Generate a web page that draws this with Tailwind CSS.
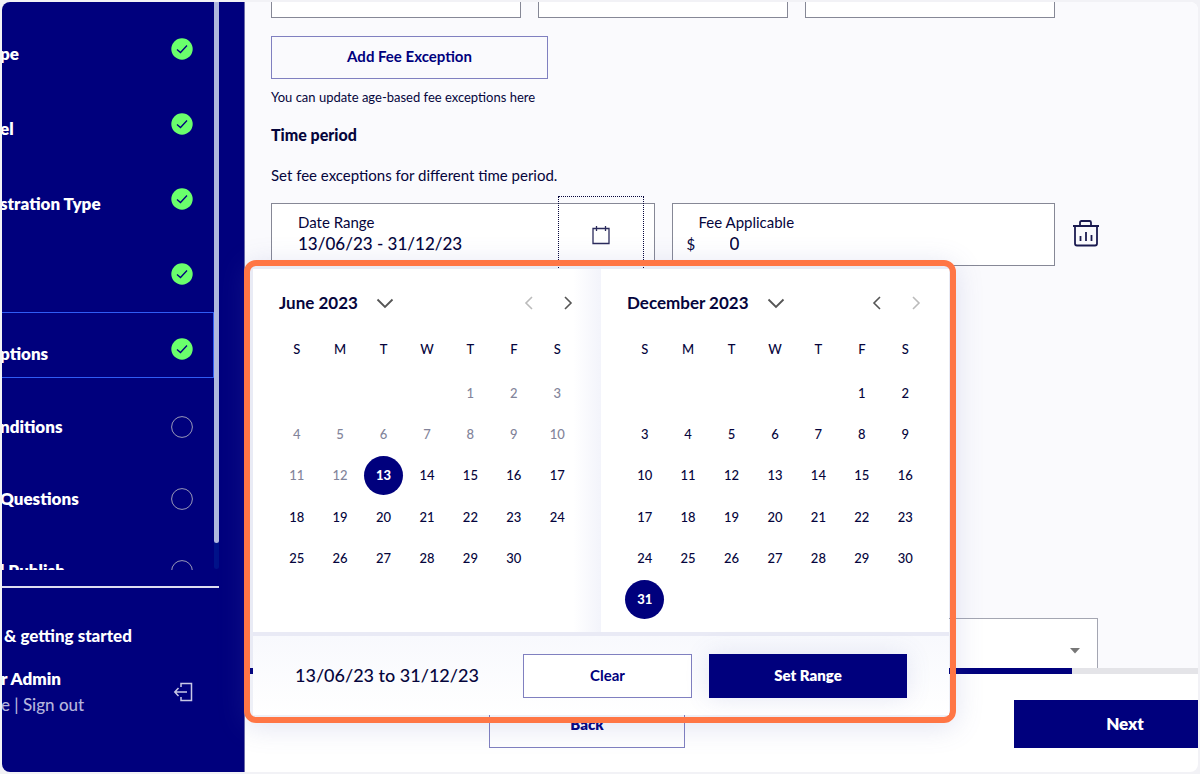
<!DOCTYPE html>
<html lang="en">
<head>
    <meta charset="UTF-8">
    <meta name="viewport" content="width=device-width, initial-scale=1.0">
    <title>Fee Exceptions</title>
    <script src="https://cdn.jsdelivr.net/npm/@tailwindcss/browser@4"></script>
</head>
<body class="bg-[#f2f2f6] font-['Lato',sans-serif] text-[#05053c]">

    <div class="relative h-screen p-0.5">
        <div class="flex h-full overflow-hidden rounded-lg bg-white">

            <!-- Sidebar -->
            <aside class="flex w-[243px] shrink-0 flex-col overflow-hidden border-r border-[#6c6ca8] bg-[#00007d] pr-[25px] text-[17px] font-extrabold text-white">
                <nav class="flex h-[568px] overflow-hidden">
                    <ul id="steps" class="flex-1 pt-[10px]"></ul>
                    <div class="h-[567px] w-[5px] rounded-b bg-[#001289]">
                        <div class="h-[541px] rounded-b bg-[#b0b8de]"></div>
                    </div>
                </nav>
                <div class="mt-4 border-t-2 border-[#dcdcf0]"></div>
                <a href="#" class="mt-9 pl-0.5 leading-6 font-black">&amp; getting started</a>
                <div class="mt-[18px] flex items-center justify-between pr-[26px]">
                    <div class="-ml-px leading-[26px]">
                        <p>r Admin</p>
                        <p class="font-medium text-[#b4b4dc]"><a href="#">e</a> | <a href="#">Sign out</a></p>
                    </div>
                    <button aria-label="Sign out">
                        <svg class="size-5" viewBox="0 0 20 20" fill="none" stroke="#c8c8e6" stroke-width="1.5">
                            <path d="M8 5V1.500H18.500V18.500H8V15M14 10H2M5.500 6L1.800 10L5.500 14"/>
                        </svg>
                    </button>
                </div>
            </aside>

            <!-- Main -->
            <main class="flex min-w-0 flex-1 flex-col">
                <div class="flex flex-1 flex-col overflow-hidden bg-[#fafafd] pl-[26px]">
                    <div class="grid grid-cols-3 gap-[17px] pr-[143px]">
                        <input aria-label="Minimum age" class="h-4 border border-t-0 border-[#868896] bg-white">
                        <input aria-label="Maximum age" class="h-4 border border-t-0 border-[#868896] bg-white">
                        <input aria-label="Fee" class="h-4 border border-t-0 border-[#868896] bg-white">
                    </div>
                    <button class="mt-[18px] h-[43px] w-[277px] shrink-0 border border-[#8080c0] pb-0.5 text-[15px] font-bold text-[#00007d]">Add Fee Exception</button>
                    <p class="mt-2 text-[13px] leading-5">You can update age-based fee exceptions here</p>
                    <h2 class="mt-4 text-[16px] leading-6 font-black">Time period</h2>
                    <p class="mt-4 text-[15px] leading-6">Set fee exceptions for different time period.</p>

                    <div class="mt-4 flex items-start">
                        <div class="grid flex-1 grid-cols-2 gap-[17px]">
                            <div class="relative h-[63px] border border-[#868896] bg-white pt-2 pl-[26px]">
                                <label for="range" class="block text-[15px] leading-5">Date Range</label>
                                <input id="range" value="13/06/23 - 31/12/23" class="block w-[220px] text-[17px] leading-6 font-medium outline-none">
                                <button aria-label="Open calendar" class="absolute -top-2 right-2.5 flex h-[78px] w-[86px] items-center justify-center border border-dotted border-[#05053c]">
                                    <svg class="size-5" viewBox="0 0 20 20" fill="none" stroke="#2a2a5c" stroke-width="1.300">
                                        <path d="M2 3.500H18V18.500H2ZM5.500 1V6M14.500 1V6"/>
                                    </svg>
                                </button>
                            </div>
                            <div class="h-[63px] border border-[#868896] bg-white pt-2">
                                <label for="fee" class="block pl-[26px] text-[15px] leading-5">Fee Applicable</label>
                                <div class="flex pl-[14px] leading-6">
                                    <span class="w-[43px] text-[15px]">$</span>
                                    <input id="fee" value="0" class="w-40 text-[17px] font-medium outline-none">
                                </div>
                            </div>
                        </div>
                        <button aria-label="Delete" class="mt-4 mr-[98px] ml-[17px]">
                            <svg class="size-7" viewBox="0 0 28 28" fill="none" stroke="#1a1a50" stroke-width="1.800">
                                <path d="M1 7H27M8 7V3.500Q8 2 9.500 2H17.500Q19 2 19 3.500V7M3 7V24.500Q3 26.500 5 26.500H23Q25 26.500 25 24.500V7M8.500 17V22M14 13V22M19.500 16V22"/>
                            </svg>
                        </button>
                    </div>

                    <div class="mt-auto mr-[100px] flex h-[50px] shrink-0 border border-b-0 border-[#a4a6b2] bg-white">
                        <select aria-label="Time zone" class="w-full appearance-none outline-none"></select>
                        <svg class="mt-7 mr-4 h-2 w-3 shrink-0" viewBox="0 0 12 8"><path d="M1 1H11L6 6.500Z" fill="#777"/></svg>
                    </div>
                </div>

                <!-- Progress -->
                <div class="h-1.5 bg-[#e4e4e8]">
                    <div class="h-full bg-[#00007d]" style="width: 86.8%"></div>
                </div>

                <div class="flex h-[98px] items-start justify-between pt-[26px] pl-[244px]">
                    <button class="h-12 w-[196px] border border-[#8080c0] text-[15px] font-extrabold text-[#00007d]">Back</button>
                    <button class="h-12 w-[184px] bg-[#00007d] pl-[38px] text-[17px] font-extrabold text-white">Next</button>
                </div>
            </main>
        </div>

        <!-- Date range popup -->
        <div class="absolute top-[260px] left-[244px] w-[712px] rounded-xl border-6 border-[#ff7645] bg-[#2a3a9c]/8 pt-[3px] pr-px pb-[2px] pl-[3px] shadow-[0_4px_28px_rgba(90,100,180,0.18)]">
            <div class="bg-white">
                <div class="flex border-b-4 border-[#e9eaf5]">
                    <section id="june" class="flex-1 bg-linear-to-l from-[#f3f4fb] to-white to-8% px-[22px] pb-3"></section>
                    <section id="december" class="flex-1 px-[22px] pb-3"></section>
                </div>
                <div class="flex h-[79px] items-center bg-linear-to-b from-[#f8f9fd] to-white px-[42px]">
                    <p class="flex-1 text-[18px] font-medium">13/06/23 to 31/12/23</p>
                    <button class="mr-[17px] h-11 w-[169px] border border-[#8080c0] bg-white text-[15px] font-bold text-[#00007d]">Clear</button>
                    <button class="h-11 w-[198px] bg-[#00007d] text-[15px] font-extrabold text-white shadow-[0_0_24px_rgba(90,100,180,0.15)]">Set Range</button>
                </div>
            </div>
        </div>
    </div>

    <script>
        const tick = `<svg class="size-[22px]" viewBox="0 0 22 22"><circle cx="11" cy="11" r="10.7" fill="#6aff6c"/><path d="M6 11.500L9.500 14.500L16 7.500" fill="none" stroke="#00007d" stroke-width="1.300"/></svg>`;
        const ring = `<svg class="size-[22px]" viewBox="0 0 22 22"><circle cx="11" cy="11" r="10.400" fill="none" stroke="#9898b8"/></svg>`;

        const steps = [
            { text: "pe", done: true },
            { text: "el", done: true },
            { text: "stration Type", done: true },
            { text: "", done: true },
            { text: "ptions", done: true, active: true },
            { text: "nditions" },
            { text: "Questions" },
            { text: "l Publish" },
        ];

        document.getElementById("steps").innerHTML = steps.map((s, i) => {
            let row = "flex h-[72px] items-center justify-between pr-[21px]";
            if (s.done) row = "mb-[9px] flex h-[66px] items-center justify-between border border-l-0 border-transparent pt-2 pr-5";
            if (s.active) row = "mb-[13px] flex h-[66px] items-center justify-between border border-l-0 border-[#2f5cf5] pt-2 pr-5";
            return `<li class="${row}"><a href="#" class="${s.done ? "-ml-0.5 pt-2.5" : "-ml-0.5"}">${s.text}</a>${s.done ? tick : ring}</li>`;
        }).join("");

        // start = weekday of the 1st, off = last disabled day
        function calendar(id, title, start, days, off, selected) {
            const first = id === "june";
            let rows = "";
            for (let r = 0; r < 6; r++) {
                rows += "<tr>";
                for (let c = 0; c < 7; c++) {
                    const d = r * 7 + c - start + 1;
                    let cls = "size-[39px] rounded-full";
                    if (d <= off) cls = "size-[39px] rounded-full text-[#82849a]";
                    if (d === selected) cls = "size-[39px] rounded-full bg-[#00007d] font-black text-white";
                    rows += `<td class="h-[41px] p-0 text-center">${d > 0 && d <= days ? `<button class="${cls}">${d}</button>` : ""}</td>`;
                }
                rows += "</tr>";
            }
            document.getElementById(id).innerHTML = `
                <div class="flex h-[68px] items-center pl-1">
                    <button class="flex items-center gap-[18px] text-[17px] font-bold">${title}
                        <svg class="h-5 w-[18px]" viewBox="0 0 18 20" fill="none" stroke="#555" stroke-width="1.800"><path d="M1.500 6.500L9 14L16.500 6.500"/></svg>
                    </button>
                    <button aria-label="Previous month" class="ml-auto"><svg class="h-5 w-3" viewBox="0 0 12 20" fill="none" stroke="${first ? "#bbb" : "#555"}" stroke-width="1.600"><path d="M9 4L3 10L9 16"/></svg></button>
                    <button aria-label="Next month" class="mr-[5px] ml-[27px]"><svg class="h-5 w-3" viewBox="0 0 12 20" fill="none" stroke="${first ? "#555" : "#bbb"}" stroke-width="1.600"><path d="M3 4L9 10L3 16"/></svg></button>
                </div>
                <table class="h-[283px] w-full table-fixed text-[13px] font-medium">
                    <thead><tr>${["S", "M", "T", "W", "T", "F", "S"].map(d => `<th class="h-[35px] p-0 pb-2.5 font-medium">${d}</th>`).join("")}</tr></thead>
                    <tbody class="leading-5">${rows}</tbody>
                </table>`;
        }

        calendar("june", "June 2023", 4, 30, 12, 13);
        calendar("december", "December 2023", 5, 31, 0, 31);
    </script>

</body>
</html>
